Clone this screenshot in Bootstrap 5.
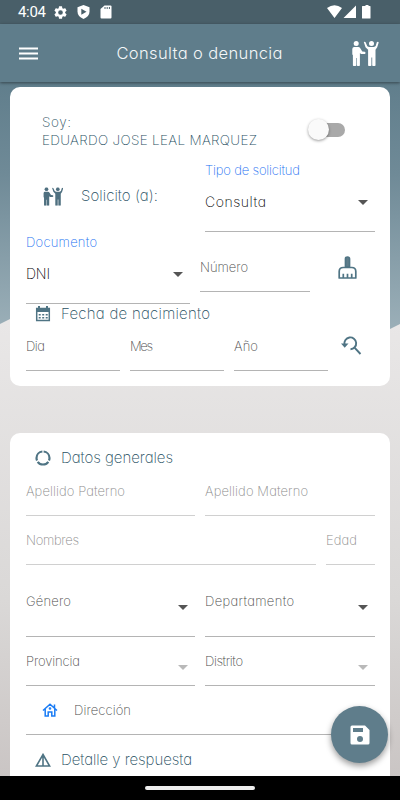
<!DOCTYPE html>
<html lang="es">
<head>
<meta charset="utf-8">
<meta name="viewport" content="width=device-width, initial-scale=1">
<title>Consulta o denuncia</title>
<link href="https://cdn.jsdelivr.net/npm/bootstrap@5.3.0/dist/css/bootstrap.min.css" rel="stylesheet">
<style>
:root { --slate: #5f7d8b; --ink: #1f4f62; }
body { font-family: Inter, "Liberation Sans", sans-serif; font-weight: 200; font-feature-settings: "cv11" 1; font-size: 13px; line-height: 18px; color: #4c4c4c; }
svg { display: block; flex: none; }
span, .heading, .lbl { white-space: nowrap; }
.screen { width: 400px; height: 800px; background: linear-gradient(#e9e7e7 320px, #dad8d7 600px, #cac5c4 776px); }
.status { height: 24px; padding: 0 28px 0 18px; background: #495f69; color: #fff; font: 400 15px/24px Roboto, sans-serif; }
.topbar { height: 58px; background: var(--slate); box-shadow: 0 1px 3px rgba(0,0,0,.45); padding: 0 21px 0 19px; z-index: 2; }
.topbar .title { font-size: 16.5px; font-weight: 300; color: #f4f7f8; margin-left: 10px; }
.backdrop { top: 24px; height: 305px; background: linear-gradient(#5f7d8b 50px, #6f8a97 150px, #9bafb8 305px); clip-path: polygon(0 0, 100% 0, 100% 300px, 390px 305px, 200px 305px, 10px 295px, 0 300px); }
.panel { margin: 0 10px; background: #fff; border-radius: 10px; padding: 0 15px 0 16px; }
.panel-one { margin-top: 5px; height: 299px; }
.panel-two { margin-top: 47px; height: 343px; border-radius: 10px 10px 0 0; padding-top: 16px; }
.h-who { height: 73px; padding: 0 30px 0 16px; }
.h-72 { height: 72px; }
.h-49 { height: 49px; }
.gap-cells { gap: 10px; }
.who { font-size: 13.5px; color: var(--ink); padding-top: 26px; }
.toggle { width: 36px; height: 14px; border-radius: 7px; background: #a9a9a9; margin-top: 36px; }
.toggle i { display: block; width: 21px; height: 21px; margin: -4px 0 0 -1px; border-radius: 50%; background: #fafafa; box-shadow: 0 1px 3px rgba(0,0,0,.4); }
.cell { border-bottom: 1px solid #b4b4b4; min-width: 0; }
.cell-off { border-color: #d0d0d0; color: #8c8c8c; }
.pick { padding: 1px 7px 0 0; color: #000; }
.pick .lbl { color: #1a70f2; }
.pick .val { font-size: 14px; margin-top: 14px; }
.number { height: 60px; margin-left: 10px; padding-top: 26px; }
.brush { margin: 24px 18px 0 auto; }
.seek { margin: 14px 0 0 3px; }
.heading { height: 18px; padding-left: 9px; color: var(--ink); font-size: 15px; }
.heading svg + span { margin-left: 10px; }
.heading.asks svg + span { margin-left: 18px; }
.heading.last { margin-top: 16px; }
.heading.birth { padding-top: 1px; }
.caret { width: 0; height: 0; border: 5px solid transparent; border-top-color: #555; border-bottom: 0; }
.caret-off { border-top-color: #b9b9b9; }
.cell > .caret { margin: 13px 7px 0 0; }
.w-doc { width: 164px; } .w-num { width: 110px; } .w-date { width: 94px; } .w-age { width: 49px; } .w-req { width: 170px; }
.fab { right: 12px; top: 706px; width: 57px; height: 57px; border-radius: 50%; background: var(--slate); box-shadow: 0 3px 6px rgba(0,0,0,.4); }
.navbottom { height: 24px; background: #000; }
.navbottom b { width: 110px; height: 4px; border-radius: 2px; background: #eee; }
</style>
<script src="https://cdn.jsdelivr.net/npm/bootstrap@5.3.0/dist/js/bootstrap.bundle.min.js"></script>
</head>
<body>
<svg width="0" height="0" class="position-absolute">
  <symbol id="people" viewBox="0 0 27 25">
    <g fill="currentColor"><circle cx="4.7" cy="2.6" r="2.5"/><circle cx="20" cy="2.6" r="2.5"/>
    <path d="M2.600 6h4.200q1.200 0 1.800 1l2.200 3.600 2.400.2q1 .4.800 1.400-.4 1-1.400.9H9.500L8.400 12v12.300q0 .7-.8.700H6.200q-.8 0-.8-.8V17H4.800v7.200q0 .8-.8.800H2.200q-.8 0-.8-.8V14L.8 13.400V8Q1 6 2.600 6z"/>
    <path d="M12.300 1q1-.8 1.800.300l1.700 3.900L17.500 6h5l1.700-1L25.300 1.300q.8-1 1.700-.3.300.4-.1 1.600L25.700 6.300 24 8.800V24.200q0 .8-.8.800h-1.700q-.8 0-.8-.8V16.500h-.8v7.700q0 .8-.8.800h-1.700q-.8 0-.8-.8V8.800L14 6.200z"/></g>
  </symbol>
</svg>
<div class="screen position-relative overflow-hidden d-flex flex-column">
  <div class="backdrop position-absolute start-0 end-0"></div>
  <header class="status position-relative d-flex align-items-center">
    <span data-w="28">4:04</span>
    <svg class="ms-2" width="13" height="13" viewBox="2 2 20 20"><path fill="#fff" d="M19.140 12.940a7 7 0 0 0 0-1.880l2.030-1.580a.5.5 0 0 0 .12-.61l-1.920-3.320a.5.5 0 0 0-.59-.22l-2.390.960a7 7 0 0 0-1.620-.94l-.36-2.540a.5.5 0 0 0-.48-.41h-3.840a.5.5 0 0 0-.47.410l-.36 2.540a7 7 0 0 0-1.620.940l-2.390-.96a.5.5 0 0 0-.59.220L2.740 8.870a.5.5 0 0 0 .12.610l2.030 1.580a7 7 0 0 0 0 1.880l-2.030 1.580a.5.5 0 0 0-.12.610l1.920 3.320c.12.220.370.290.590.220l2.390-.96c.5.380 1.030.700 1.620.940l.36 2.540c.05.240.240.410.480.410h3.840c.240 0 .440-.170.470-.410l.36-2.540a7 7 0 0 0 1.620-.94l2.390.960c.220.080.470 0 .590-.22l1.920-3.320a.5.5 0 0 0-.12-.61zM12 15.600a3.600 3.600 0 1 1 0-7.200 3.600 3.600 0 0 1 0 7.200z"/></svg>
    <svg class="ms-2" width="17" height="14" viewBox="0 0 17 14"><path fill="#fff" d="M8.500 0l6 2.200v4.300q0 5-6 7.500-6-2.500-6-7.500V2.200z"/><path fill="#495f69" d="M6.300 3.800l5.200 3-5.200 3z"/></svg>
    <svg class="ms-1" width="19" height="14" viewBox="-3 0 19 14"><path fill="#fff" d="M5.500 0.500H11.500q1 0 1 1V12.500q0 1-1 1H2.500q-1 0-1-1V4z"/><path stroke="#495f69" d="M6 2v2M8.200 2v2M10.400 2v2"/></svg>
    <svg class="ms-auto" width="45" height="14" viewBox="0 0 45 14"><path fill="#fff" d="M0 3Q7.500-2.500 15 3L7.500 13zM29 .5V13H16.500zM37 1h1.500V0h3v1h1.500q.5 0 .5.600v11.300q0 .6-.6.600h-7.300q-.6 0-.6-.6V1.600q0-.6.600-.6z"/></svg>
  </header>
  <nav class="topbar position-relative d-flex align-items-center justify-content-between">
    <svg width="19" height="13" viewBox="0 0 19 13"><path stroke="#fff" stroke-width="2" d="M0 1.500h19M0 6.500h19M0 11.500h19"/></svg>
    <span class="title" data-w="166">Consulta o denuncia</span>
    <svg class="text-white" width="28" height="25"><use href="#people"/></svg>
  </nav>

  <section class="panel panel-one position-relative">
    <div class="h-who d-flex justify-content-between">
      <div class="who"><span data-w="29">Soy:</span><br><span data-w="215">EDUARDO JOSE LEAL MARQUEZ</span></div>
      <div class="toggle"><i></i></div>
    </div>
    <div class="d-flex h-72">
      <div class="heading asks d-flex align-items-center flex-fill h-100">
        <svg class="ms-2" width="20" height="19" viewBox="0 0 27 25" color="#4f7080"><use href="#people" width="27" height="25"/></svg>
        <span data-w="77">Solicito (a):</span>
      </div>
      <div class="cell pick w-req">
        <div class="lbl"><span data-w="95">Tipo de solicitud</span></div>
        <div class="val d-flex align-items-center justify-content-between"><span data-w="61">Consulta</span><i class="caret"></i></div>
      </div>
    </div>
    <div class="d-flex h-72">
      <div class="cell pick w-doc">
        <div class="lbl"><span data-w="71">Documento</span></div>
        <div class="val d-flex align-items-center justify-content-between"><span data-w="24">DNI</span><i class="caret"></i></div>
      </div>
      <div class="cell w-num number"><span data-w="48">Número</span></div>
      <svg class="brush" width="19" height="24" viewBox="0 0 19 24" fill="none" stroke="#4f7484" stroke-width="1.700"><path fill="#5f7d8b" d="M7.500 11V2.700q0-1.700 2-1.700t2 1.700V11z"/><path stroke-linejoin="round" d="M1.200 22V15.500q0-4 4-4h8.600q4 0 4 4V22zM5.300 22v-4.300M9.500 22v-4.300M13.700 22v-4.300"/></svg>
    </div>
    <div class="heading birth d-flex align-items-center">
      <svg width="16" height="16" viewBox="0 0 16 16"><path fill="none" stroke="#4f7484" stroke-width="1.500" d="M1.700 2.500h12.600v12H1.700z"/><path fill="#4f7484" d="M1 2h14v4H1zM3 0h2v3H3zM11 0h2v3h-2z"/><path stroke="#4f7484" stroke-width="1.500" stroke-dasharray="2 1.500" d="M3.700 8.700h9M3.700 11.700h9"/></svg>
      <span data-w="149">Fecha de nacimiento</span>
    </div>
    <div class="d-flex h-49 gap-cells">
      <div class="cell w-date d-flex align-items-center"><span data-w="19">Dia</span></div>
      <div class="cell w-date d-flex align-items-center"><span data-w="23">Mes</span></div>
      <div class="cell w-date d-flex align-items-center"><span data-w="24">Año</span></div>
      <svg class="seek" width="21" height="20" viewBox="0 0 21 20" fill="none" stroke="#4f7484" stroke-width="1.900"><path d="M3.500 8.500A5.900 5.900 0 1 1 9.500 13.200M13.300 11.300l6.200 6.700"/><path fill="#4f7484" stroke="none" d="M0 7.500h7.500L3.700 11.800z"/></svg>
    </div>
  </section>

  <section class="panel panel-two position-relative">
    <div class="heading d-flex align-items-center">
      <svg width="16" height="16" viewBox="0 0 16 16" fill="none" stroke="#4f7484" stroke-width="2.200"><circle cx="8" cy="8" r="6.500" pathLength="120" stroke-dasharray="36 4" stroke-dashoffset="-12"/></svg>
      <span data-w="112">Datos generales</span>
    </div>
    <div class="d-flex h-49 gap-cells">
      <div class="cell cell-off flex-fill d-flex align-items-center"><span data-w="99">Apellido Paterno</span></div>
      <div class="cell cell-off w-req d-flex align-items-center"><span data-w="103">Apellido Materno</span></div>
    </div>
    <div class="d-flex h-49 gap-cells">
      <div class="cell cell-off flex-fill d-flex align-items-center"><span data-w="53">Nombres</span></div>
      <div class="cell cell-off w-age d-flex align-items-center"><span data-w="31">Edad</span></div>
    </div>
    <div class="d-flex h-72 gap-cells">
      <div class="cell flex-fill d-flex align-items-center justify-content-between"><span data-w="45">Género</span><i class="caret"></i></div>
      <div class="cell w-req d-flex align-items-center justify-content-between"><span data-w="89">Departamento</span><i class="caret"></i></div>
    </div>
    <div class="d-flex h-49 gap-cells">
      <div class="cell flex-fill d-flex align-items-center justify-content-between"><span data-w="54">Provincia</span><i class="caret caret-off"></i></div>
      <div class="cell w-req d-flex align-items-center justify-content-between"><span data-w="38">Distrito</span><i class="caret caret-off"></i></div>
    </div>
    <div class="cell h-49 d-flex align-items-center">
      <svg class="ms-3" width="16" height="14" viewBox="0 0 16 14" fill="none" stroke="#1a7cf5" stroke-width="1.500"><path d="M1 7.500L8 1.300l7 6.200M12.500 5V1.500M3.200 6v7h3V9h3.600v4h3V6"/><circle cx="8" cy="5.500" r=".6"/></svg>
      <span class="ms-3" data-w="57">Dirección</span>
    </div>
    <div class="heading last d-flex align-items-center">
      <svg width="16" height="14" viewBox="0 0 16 14" fill="none" stroke="#4f7484" stroke-width="1.600"><path d="M8 1.500L14.600 13H1.400zM8 1v12"/></svg>
      <span data-w="131">Detalle y respuesta</span>
    </div>
  </section>

  <button class="fab btn p-0 border-0 position-absolute d-flex align-items-center justify-content-center" aria-label="Guardar">
    <svg width="20" height="20" viewBox="0 0 20 20"><path fill="#fff" fill-rule="evenodd" d="M2 .5h13L19.500 5v13q0 1.500-1.500 1.500H2Q.5 19.500.5 18V2Q.5.500 2 .5zM3 3v4h10V3zM10 11a3 3 0 1 0 0 6 3 3 0 0 0 0-6z"/></svg>
  </button>
  <footer class="navbottom position-relative d-flex align-items-center justify-content-center"><b></b></footer>
</div>
<script>
// Spread each label over its nominal width through letter spacing.
document.fonts.ready.then(() => document.querySelectorAll('[data-w]').forEach(el => {
  const n = el.textContent.length;
  const extra = (el.dataset.w - el.getBoundingClientRect().width) / (n - 1);
  el.style.letterSpacing = extra.toFixed(3) + 'px';
  el.style.marginRight = (-extra).toFixed(3) + 'px';
}));
</script>
</body>
</html>
